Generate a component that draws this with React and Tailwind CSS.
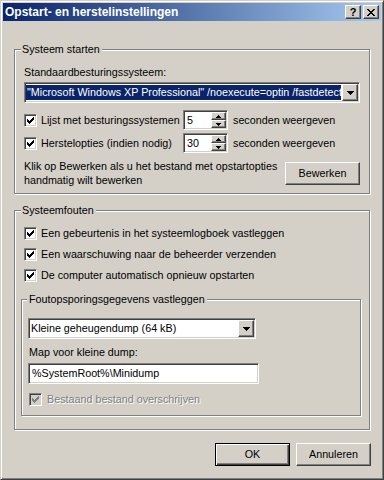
import React from "react";

const FONT = "font-['Liberation_Sans',Arial,sans-serif]";
const RAISED =
  "bg-[#d4d0c8] border border-t-white border-l-white border-b-[#404040] border-r-[#404040] shadow-[inset_-1px_-1px_0_#808080]";
const SUNKEN =
  "border border-t-[#808080] border-l-[#808080] border-b-white border-r-white shadow-[inset_1px_1px_0_#404040,inset_-1px_-1px_0_#d4d0c8]";

const CHECK_PX = [
  [6, 0], [5, 1], [6, 1], [0, 2], [4, 2], [5, 2], [6, 2],
  [0, 3], [1, 3], [3, 3], [4, 3], [5, 3],
  [0, 4], [1, 4], [2, 4], [3, 4], [4, 4],
  [1, 5], [2, 5], [3, 5], [2, 6],
];

function Checkbox({ disabled }) {
  return (
    <span
      className={
        disabled
          ? "relative block w-[13px] h-[13px] shrink-0 bg-[#d4d0c8] " + SUNKEN
          : "relative block w-[13px] h-[13px] shrink-0 bg-white " + SUNKEN
      }
    >
      <svg
        width="7"
        height="7"
        viewBox="0 0 7 7"
        shapeRendering="crispEdges"
        className="absolute left-[2px] top-[2px]"
      >
        {CHECK_PX.map(([x, y]) => (
          <rect key={x + "-" + y} x={x} y={y} width="1" height="1" fill={disabled ? "#808080" : "#000"} />
        ))}
      </svg>
    </span>
  );
}

function DownArrow() {
  return (
    <svg width="7" height="4" viewBox="0 0 7 4" shapeRendering="crispEdges">
      <rect x="0" y="0" width="7" height="1" fill="#000" />
      <rect x="1" y="1" width="5" height="1" fill="#000" />
      <rect x="2" y="2" width="3" height="1" fill="#000" />
      <rect x="3" y="3" width="1" height="1" fill="#000" />
    </svg>
  );
}

function SmallArrow({ up }) {
  return (
    <svg width="5" height="3" viewBox="0 0 5 3" shapeRendering="crispEdges">
      {up ? (
        <>
          <rect x="2" y="0" width="1" height="1" fill="#000" />
          <rect x="1" y="1" width="3" height="1" fill="#000" />
          <rect x="0" y="2" width="5" height="1" fill="#000" />
        </>
      ) : (
        <>
          <rect x="0" y="0" width="5" height="1" fill="#000" />
          <rect x="1" y="1" width="3" height="1" fill="#000" />
          <rect x="2" y="2" width="1" height="1" fill="#000" />
        </>
      )}
    </svg>
  );
}

function Spin({ value }) {
  return (
    <div className={"w-[45px] h-[20px] shrink-0 bg-white p-[1px] flex " + SUNKEN}>
      <span className="flex-1 pl-[2px] leading-[16px]">{value}</span>
      <div className="w-[15px] flex flex-col">
        <div className={"h-[8px] flex items-center justify-center " + RAISED}>
          <SmallArrow up />
        </div>
        <div className={"h-[8px] flex items-center justify-center " + RAISED}>
          <SmallArrow />
        </div>
      </div>
    </div>
  );
}

function ComboButton() {
  return (
    <div className={"w-[16px] h-[17px] shrink-0 flex items-center justify-center " + RAISED}>
      <DownArrow />
    </div>
  );
}

function GroupBox({ label, className, labelClass, children }) {
  return (
    <div
      className={
        "relative border border-[#808080] shadow-[1px_1px_0_#fff,inset_1px_1px_0_#fff] " + className
      }
    >
      <span className={"absolute top-[-7px] bg-[#d4d0c8] leading-[13px] whitespace-nowrap " + labelClass}>
        {label}
      </span>
      {children}
    </div>
  );
}

function CheckRow({ children, disabled, className }) {
  return (
    <div className={"h-[13px] flex items-center " + (className || "")}>
      <Checkbox disabled={disabled} />
      <span
        className={
          disabled
            ? "ml-[5px] whitespace-nowrap text-[#808080] [text-shadow:1px_1px_0_#fff]"
            : "ml-[4px] whitespace-nowrap"
        }
      >
        {children}
      </span>
    </div>
  );
}

function TitleButton({ children }) {
  return (
    <div className={"w-[16px] h-[14px] flex items-center justify-center " + RAISED}>{children}</div>
  );
}

export default function App() {
  return (
    <div
      className={
        FONT +
        " w-[384px] h-[480px] bg-[#d4d0c8] text-black text-[10.75px] leading-[13px] p-[2px] border border-t-[#d4d0c8] border-l-[#d4d0c8] border-b-[#404040] border-r-[#404040] shadow-[inset_1px_1px_0_#fff,inset_-1px_-1px_0_#808080] overflow-hidden"
      }
    >
      {/* Title bar */}
      <div className="h-[18px] flex items-center bg-[linear-gradient(to_right,#0a246a,#a6caf0)] pl-[2px] pr-[2px]">
        <span className="text-white font-bold text-[12px] leading-[18px] whitespace-nowrap">
          Opstart- en herstelinstellingen
        </span>
        <div className="ml-auto flex gap-[2px]">
          <TitleButton>
            <span className="font-bold text-[11px] leading-[11px]">?</span>
          </TitleButton>
          <TitleButton>
            <svg width="8" height="7" viewBox="0 0 8 7" shapeRendering="crispEdges">
              <path
                d="M0 0h2v1h-2zM6 0h2v1h-2zM1 1h2v1h-2zM5 1h2v1h-2zM2 2h4v1h-4zM3 3h2v1h-2zM2 4h4v1h-4zM1 5h2v1h-2zM5 5h2v1h-2zM0 6h2v1h-2zM6 6h2v1h-2z"
                fill="#000"
              />
            </svg>
          </TitleButton>
        </div>
      </div>

      {/* Body */}
      <div className="flex flex-col px-[11px]">
        {/* Systeem starten */}
        <GroupBox label="Systeem starten" className="mt-[28px] h-[145px]" labelClass="left-[6px] pl-[1px] pr-[2px]">
          <div className="px-[9px] pt-[16px]">
            <div className="h-[13px] whitespace-nowrap">Standaardbesturingssysteem:</div>
            <div className={"mt-[3px] h-[21px] bg-white p-[1px] flex " + SUNKEN}>
              <div className="flex-1 min-w-0 py-[1px] pr-[1px]">
                <div className="h-[15px] bg-[#0a246a] text-white leading-[15px] whitespace-nowrap overflow-hidden pl-[1px]">
                  "Microsoft Windows XP Professional" /noexecute=optin /fastdetect
                </div>
              </div>
              <ComboButton />
            </div>

            <div className="mt-[7px] h-[20px] flex items-center">
              <Checkbox />
              <span className="ml-[4px] w-[142px] whitespace-nowrap">Lijst met besturingssystemen</span>
              <Spin value="5" />
              <span className="ml-[5px] whitespace-nowrap">seconden weergeven</span>
            </div>
            <div className="mt-[3px] h-[20px] flex items-center">
              <Checkbox />
              <span className="ml-[4px] w-[142px] whitespace-nowrap">Herstelopties (indien nodig)</span>
              <Spin value="30" />
              <span className="ml-[5px] whitespace-nowrap">seconden weergeven</span>
            </div>

            <div className="mt-[6px] flex">
              <div className="whitespace-nowrap leading-[14px]">
                Klik op Bewerken als u het bestand met opstartopties
                <br />
                handmatig wilt bewerken
              </div>
              <button className={"ml-auto mt-[3px] w-[75px] h-[23px] " + RAISED}>Bewerken</button>
            </div>
          </div>
        </GroupBox>

        {/* Systeemfouten */}
        <GroupBox label="Systeemfouten" className="mt-[16px] h-[220px]" labelClass="left-[6px] pl-[1px] pr-[2px]">
          <div className="pt-[16px] px-[9px] flex flex-col gap-[8px]">
            <CheckRow>Een gebeurtenis in het systeemlogboek vastleggen</CheckRow>
            <CheckRow>Een waarschuwing naar de beheerder verzenden</CheckRow>
            <CheckRow>De computer automatisch opnieuw opstarten</CheckRow>
          </div>

          <GroupBox
            label="Foutopsporingsgegevens vastleggen"
            className="ml-[6px] mt-[17px] w-[340px] h-[117px]"
            labelClass="left-[5px] pl-[2px] pr-[2px]"
          >
            <div className="flex flex-col">
              <div className={"ml-[6px] mt-[18px] w-[228px] h-[21px] bg-white p-[1px] flex " + SUNKEN}>
                <div className="flex-1 min-w-0 pl-[1px] leading-[17px] whitespace-nowrap overflow-hidden">
                  Kleine geheugendump (64 kB)
                </div>
                <ComboButton />
              </div>
              <div className="ml-[7px] mt-[7px] h-[13px] whitespace-nowrap">Map voor kleine dump:</div>
              <div className={"ml-[6px] mt-[4px] w-[231px] h-[21px] bg-white p-[1px] " + SUNKEN}>
                <div className="pl-[2px] leading-[17px] whitespace-nowrap">%SystemRoot%\Minidump</div>
              </div>
              <CheckRow disabled className="ml-[7px] mt-[9px]">
                Bestaand bestand overschrijven
              </CheckRow>
            </div>
          </GroupBox>
        </GroupBox>

        {/* Buttons */}
        <div className="mt-[13px] -mr-[1px] flex justify-end gap-[6px]">
          <button className="w-[75px] h-[23px] bg-[#d4d0c8] border border-black shadow-[inset_1px_1px_0_#fff,inset_-1px_-1px_0_#404040,inset_-2px_-2px_0_#808080]">
            OK
          </button>
          <button className={"w-[75px] h-[23px] " + RAISED}>Annuleren</button>
        </div>
      </div>
    </div>
  );
}
